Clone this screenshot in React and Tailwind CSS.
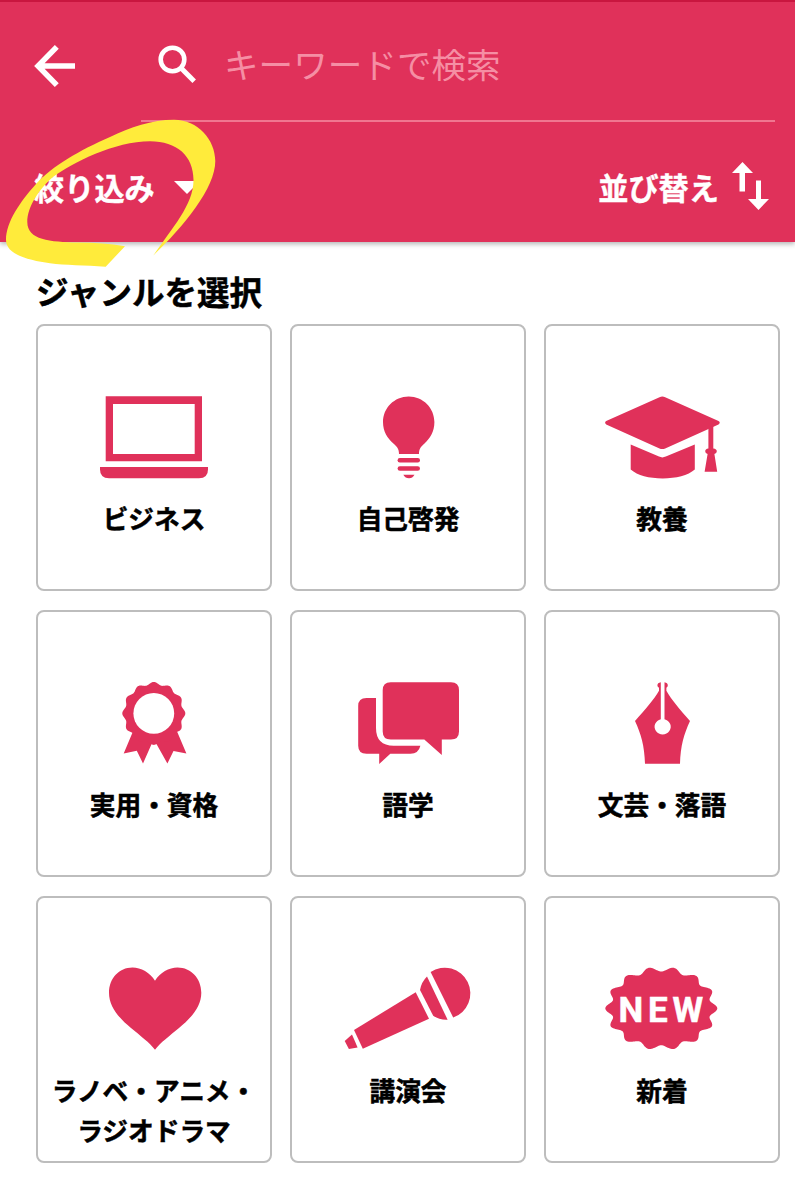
import React from 'react';

// ─── Scalloped badge outline ─────────────────────────────────────────
function scallop(cx, cy, rx, ry, lobes, depth) {
  const pts = [];
  for (let i = 0; i < 360; i += 1) {
    const t = (i * Math.PI) / 180;
    const k = 1 - depth * (0.5 - 0.5 * Math.cos(lobes * t));
    pts.push(`${(cx + rx * k * Math.cos(t)).toFixed(2)},${(cy + ry * k * Math.sin(t)).toFixed(2)}`);
  }
  return pts.join(' ');
}

function Icon({ children }) {
  return (
    <svg
      viewBox="0 0 120 84"
      className="h-[84px] w-[120px] shrink-0 overflow-visible fill-[#e0315a]"
      aria-hidden="true"
    >
      {children}
    </svg>
  );
}

// ─── Genre icons ─────────────────────────────────────────────────────
const LaptopIcon = () => (
  <Icon>
    <path fillRule="evenodd" d="M11.7 .3H108V65.3H11.7ZM19 8V57.9H100.7V8Z" />
    <path d="M6 71H114V73.5Q114 82.2 105 82.2H15Q6 82.2 6 73.5Z" />
  </Icon>
);

const BulbIcon = () => (
  <Icon>
    <path d="M60.7 .5C75 .5 86.4 12 86.4 26C86.4 36 82 42 76.5 47.5C72.5 51 71 53 71 58H51C51 53 49.4 51 45.4 47.5C39.5 42 35 36 35 26C35 12 46.4 .5 60.7 .5Z" />
    <rect x="49.6" y="62" width="22.4" height="4.4" rx="2.2" />
    <rect x="49.6" y="70.2" width="22.4" height="4.6" rx="2.3" />
    <path d="M55.3 78.7H66.5Q64.5 82.3 61 82.3Q57.3 82.3 55.3 78.7Z" />
  </Icon>
);

const CapIcon = () => (
  <Icon>
    <path d="M57.5 1.2Q60.3 -.2 63.2 1.2L116.5 25Q119 26.6 116.5 28.4L63.2 52.4Q60.3 53.7 57.5 52.4L4.2 28.4Q2 26.6 4.2 25Z" />
    <path d="M28.7 48.6L57 60.6Q60.3 62.2 63.8 60.6L92.8 48.6V73.5C86 79.5 74 82.4 60.7 82.4C47 82.4 35.5 79.5 28.7 73.5Z" />
    <path d="M106.4 32.4L111.3 30V52.5Q114.8 53 114.8 55.3Q114.8 57.3 112.4 58L115.2 75.8H102.6L105.6 58Q103.2 57.3 103.2 55.3Q103.2 53 106.4 52.5Z" />
  </Icon>
);

const RibbonIcon = () => (
  <Icon>
    <path d="M40 47L29.7 71.6L42.8 68.7L49 81.6L57.5 62.2L60 61L62.6 62.2L73.4 81.6L79.5 68.9L92.4 71.4L82 47Z" />
    <polygon points={scallop(59.8, 31.4, 31.5, 31.5, 12, 0.09)} />
    <circle cx="59.8" cy="31.4" r="20.4" fill="#fff" />
  </Icon>
);

const BubblesIcon = () => (
  <Icon>
    <path d="M42.7 .2H103Q111 .2 111 8.2V49.5Q111 57.5 103 57.5H93.8V73L76.3 57.5H42.7Q34.7 57.5 34.7 49.5V8.2Q34.7 .2 42.7 .2Z" />
    <path d="M18.5 16H28V46Q28 63.7 45.7 63.7H72.4Q70.5 71.7 62.5 71.7H42.3L31.2 82V71.7H18.5Q10.2 71.7 10.2 63.7V24Q10.2 16 18.5 16Z" />
  </Icon>
);

const PenIcon = () => (
  <Icon>
    <path d="M58.8 .3V37.2A8.1 7.7 0 1 0 62.5 37.2V.3Q65.8 .8 65.8 3.4Q65.8 4.8 64.4 5.800V8.8C69 17 78 28 88 39C82 52 78.5 64 78 81.8H43C42.5 64 39 52 33 39C43 28 52.3 17 57 8.800V5.800Q55.400 4.800 55.400 3.400Q55.400 .8 58.800 .3Z" />
  </Icon>
);

const HeartIcon = () => (
  <Icon>
    <path d="M61 12.8C56 4.5 47 -.5 38.5 -.5C25 -.5 15 10.5 15 24.8C15 39 25 50 37 60C46 67.5 56 75 61 81.7C66 75 76 67.5 85 60C97 50 107.3 39 107.3 24.8C107.3 10.5 97 -.5 83.5 -.5C75 -.5 66 4.5 61 12.8Z" />
  </Icon>
);

const MicIcon = () => (
  <Icon>
    <path d="M82.6 4A25.6 25.6 0 1 1 105.2 49.5Z" />
    <path d="M79 8.6L99.6 51.7C94 52 89 50.5 85.2 47.7L72 22Q73.5 14 79 8.6Z" />
    <path d="M67.7 24.2L81 50.7L14.8 80.8L6 62Z" />
    <path d="M4 66.5L9.6 79.6L.9 81.1L-3.3 73Z" />
  </Icon>
);

const NewIcon = () => (
  <Icon>
    <polygon points={scallop(59.3, 40.4, 56, 41.6, 14, 0.115)} />
    <text
      x="16.6"
      y="53.8"
      className="fill-white stroke-white stroke-[0.5] font-['Roboto'] text-[35px] font-bold tracking-[4.8px]"
    >
      NEW
    </text>
  </Icon>
);

const GENRES = [
  { icon: LaptopIcon, lines: ['ビジネス'] },
  { icon: BulbIcon, lines: ['自己啓発'] },
  { icon: CapIcon, lines: ['教養'] },
  { icon: RibbonIcon, lines: ['実用・資格'] },
  { icon: BubblesIcon, lines: ['語学'] },
  { icon: PenIcon, lines: ['文芸・落語'] },
  { icon: HeartIcon, lines: ['ラノベ・アニメ・', 'ラジオドラマ'] },
  { icon: MicIcon, lines: ['講演会'] },
  { icon: NewIcon, lines: ['新着'] },
];

function GenreCard({ icon: GenreIcon, lines }) {
  return (
    <button className="flex h-[267px] flex-col items-center rounded-lg border-2 border-[#bdbdbd] bg-white pt-[70px]">
      <GenreIcon />
      <span className="mt-[18px] text-[25.7px] leading-[40px] font-bold whitespace-nowrap text-black [-webkit-text-stroke:0.5px_#000]">
        {lines.map((line) => (
          <span key={line} className="block">{line}</span>
        ))}
      </span>
    </button>
  );
}

// ─── Header ──────────────────────────────────────────────────────────
function Header() {
  return (
    <header className="relative h-[242px] border-t-2 border-[#c9163f] bg-[#e0315a] text-white shadow-[0_2px_5px_rgba(0,0,0,0.3)]">
      <div className="flex h-[120px] pl-[34px] pr-5">
        <button className="mt-[42px] h-[44px] w-[42px]" aria-label="戻る">
          <svg viewBox="0 0 42 44" className="h-[44px] w-[42px] fill-none stroke-white stroke-[5.5]">
            <path d="M22.8 2.8L4 22L22.8 41.2M3.5 22H41" />
          </svg>
        </button>
        <div className="ml-[65px] flex flex-1 items-start border-b-2 border-[#f07690]">
          <svg viewBox="0 0 40 40" className="mt-[42px] ml-[16px] h-10 w-10 fill-none stroke-white">
            <circle cx="15.5" cy="15.5" r="11.8" strokeWidth="4.6" />
            <path d="M24.5 24.5L37.2 37.2" strokeWidth="5" />
          </svg>
          <span className="mt-[36px] ml-[27px] text-[34.6px] leading-[50px] font-normal text-[#f58ea4]">
            キーワードで検索
          </span>
        </div>
      </div>
      <div className="flex h-[120px] items-start justify-between pt-[41px] pr-[26px] pl-[34px] text-[30.2px] leading-[48px] font-bold [-webkit-text-stroke:0.4px_#fff]">
        <button className="flex items-center">
          絞り込み
          <svg viewBox="0 0 26 13" className="ml-[19px] h-[13px] w-[26px] fill-white">
            <path d="M0 0H26L13 13Z" />
          </svg>
        </button>
        <button className="flex items-center">
          並び替え
          <svg viewBox="0 0 37 48" className="mt-[-3px] ml-[13px] h-12 w-[37px] fill-white">
            <path d="M10.500 0L21 11H13V29.500H7.500V11H0Z" />
            <path d="M24 18.500H29V37H37L26.500 48L16 37H24Z" />
          </svg>
        </button>
      </div>
      {/* hand-drawn marker ring over the filter button */}
      <svg
        viewBox="0 0 230 280"
        className="pointer-events-none absolute -top-0.5 left-0 h-[280px] w-[230px] fill-[#ffeb3b]"
        aria-hidden="true"
      >
        <path d="M125 246.200L105.700 266.700C85 265 65 265.300 50 263.200C30 260.500 6 255 6 240C6 222 20 202 36 184C52 166 80 150 110 136.900C130 127.500 152 119.800 174 119.800C198 119.800 215.300 140 215.300 161C215.300 188 184 226 153.300 255.500C172 228 193.500 205 193.500 180C193.500 156 177 141.300 150 141.300C115 141.300 72 163 53 177C39 189 27.300 207 27.300 222C27.300 240 50 242 78 242.500C95 242.800 110 243.500 125 246.200Z" />
      </svg>
    </header>
  );
}

export default function App() {
  return (
    <div className="min-h-[1199px] w-[795px] overflow-hidden bg-white font-['Noto_Sans_CJK_JP',sans-serif]">
      <Header />
      <main className="pt-[25px] pr-[15px] pl-[36px]">
        <h1 className="h-[57px] text-[32.5px] leading-[48px] font-bold text-black [-webkit-text-stroke:0.5px_#000]">
          ジャンルを選択
        </h1>
        <div className="grid grid-cols-3 gap-x-[18px] gap-y-[19px]">
          {GENRES.map((genre) => (
            <GenreCard key={genre.lines[0]} {...genre} />
          ))}
        </div>
      </main>
    </div>
  );
}
